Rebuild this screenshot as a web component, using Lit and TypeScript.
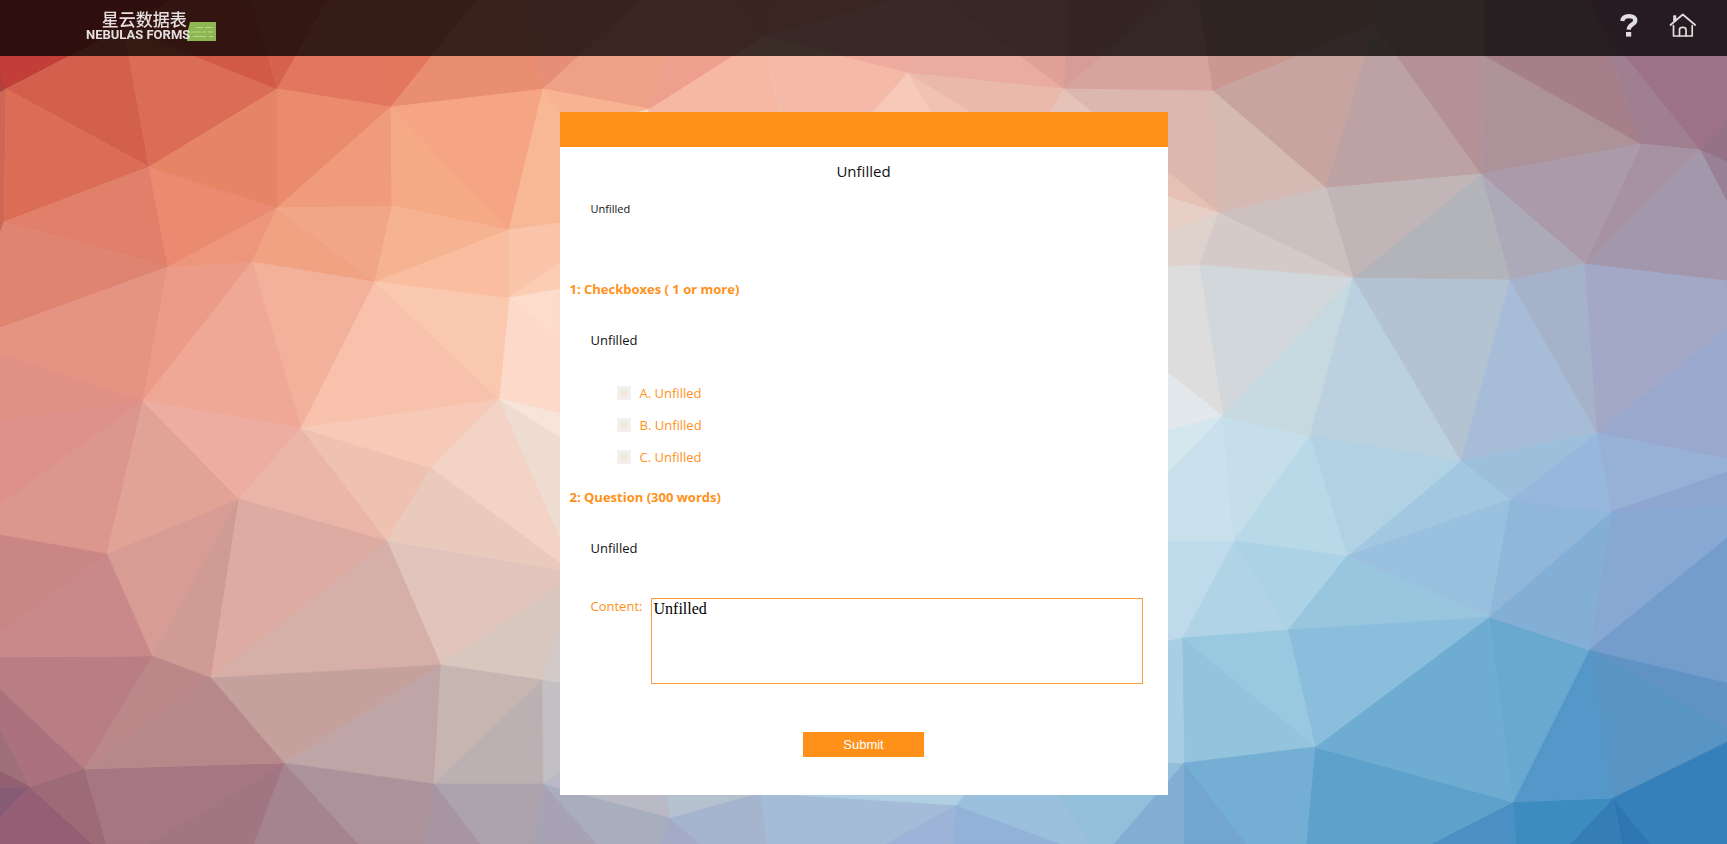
import { LitElement, html, svg, css } from "lit";
import { customElement, property } from "lit/decorators.js";

/* Facets of the low-poly backdrop: fill colour, then the corner points. */
const FACETS = `
C0403A 0,0 124,28 170,0
C33E38 0,0 124,28 6,89 0,67
B83C3A 0,67 6,89 0,87
A84840 0,87 6,89 0,93
D3604D 6,89 124,28 149,167
DB6D56 124,28 149,167 277,89
D25947 124,28 170,0 253,0 277,89
D5624E 277,89 253,0 328,0
E2765E 277,89 328,0 374,0 391,107
E2775E 391,107 374,0 477,0
E98E70 391,107 477,0 522,0 543,89
E68E78 543,89 522,0 640,0
EFA187 543,89 640,0 681,0 650,109
EF9F8D 650,109 681,0 733,0 763,37
CD6756 0,93 6,89 4,222 0,233
DB6D57 6,89 149,167 4,222
E1806A 4,222 149,167 168,267
E98A71 149,167 277,208 168,267
E68466 149,167 277,89 277,208
EA8B6C 277,89 391,107 277,208
F09B7B 391,107 392,206 277,208
F5A985 391,107 509,230 392,206
F5A583 391,107 543,89 509,230
F8B896 543,89 509,230 560,223 560,113
F8B393 543,89 560,113 575,125 650,109
DF8471 4,222 168,267 0,328 0,233
E59383 168,267 143,401 0,354 0,328
ED9B89 168,267 252,262 143,401
ED967B 168,267 277,208 252,262
F0A283 277,208 375,282 252,262
F2A688 277,208 392,206 375,282
F6B392 392,206 509,230 375,282
FABDA0 509,230 509,298 375,282
FAC5AA 509,230 509,298 560,263 560,223
FCCDB2 509,298 560,263 560,289
FDDCCC 509,298 560,289 560,340
FDD9CA 509,298 560,340 560,413 499,399
F3B09A 252,262 375,282 301,428
EFA895 252,262 301,428 143,401
F8C1AC 375,282 499,399 301,428
FAC8AE 375,282 509,298 499,399
E09084 143,401 0,354 0,421
DE918A 143,401 0,421 0,505
DB968D 143,401 107,554 0,535 0,505
E2A397 143,401 239,499 107,554
EDADA1 143,401 301,428 239,499
EBB5A9 301,428 387,541 239,499
EFC1B1 301,428 431,468 387,541
F6CAB6 301,428 499,399 431,468
F2D3C6 499,399 431,468 560,563 560,538
EFDCD0 499,399 560,538 560,437
F7E4DA 499,399 560,437 560,413
EBCABE 431,468 387,541 560,571 560,563
E1C5BC 387,541 441,665 560,586 560,571
D8C7BF 441,665 542,680 560,627 560,586
D2CAC9 542,680 560,627 560,683
C3C0C4 542,680 543,784 560,772 560,683
B9BAC6 543,784 575,762 666,790 670,818
B5C1CF 670,818 666,790 761,793
A8AEBD 543,784 670,818 661,844 597,844
A8A3B4 543,784 597,844 533,844
A5ABC7 670,818 661,844 701,844
A5B5CE 670,818 701,844 767,844 761,793
A4BCD8 761,793 767,844 886,844 956,805
9DB3D8 956,805 886,844 954,844
92B2D8 956,805 954,844 1061,844
9AC0DD 956,805 1061,844 1090,844 1056,790 968,790
93BFDA 1056,790 1090,844 1114,844 1184,763 1160,760
B0CFE2 761,793 956,805 968,790
D79D95 239,499 152,656 107,554
CF9B94 239,499 211,678 152,656
DDABA1 239,499 387,541 211,678
D5AFA8 387,541 441,665 211,678
C4A19C 211,678 441,665 284,763
BFA5A5 441,665 434,784 284,763
C7B5B2 441,665 542,680 434,784
BCB1B2 542,680 543,784 434,784
ADA3AC 434,784 543,784 533,844 480,844
A895A2 434,784 480,844 425,844
AC929B 284,763 434,784 425,844 358,844
A5848F 284,763 358,844 254,844
A17682 284,763 254,844 145,844
A67782 84,769 284,763 145,844 106,844
B6888A 84,769 211,678 284,763
BB8789 84,769 152,656 211,678
B87E83 84,769 152,656 0,657 0,689
AB717D 84,769 30,787 0,728 0,689
A07078 30,787 0,728 0,771
926070 30,787 0,771 0,788
865C74 30,787 0,788 0,818
955E75 30,787 0,818 0,844 93,844
9D6B77 30,787 84,769 106,844 93,844
C98889 107,554 152,656 0,657 0,632
CA8585 107,554 0,632 0,535
EB9C8D 763,37 733,0 773,0
EE9F91 763,37 773,0 895,0
EFAB9D 763,37 895,0 930,0 908,73
EAABA0 908,73 930,0 946,0 1064,89
E0A197 1064,89 946,0 1069,0
D79C96 1064,89 1069,0 1167,0
D7A49D 1064,89 1167,0 1199,0 1213,91
F6B8A2 650,109 763,37 782,124 640,124
F4BAA7 763,37 908,73 873,112 780,112
F6C9B8 908,73 873,112 931,112
F1C2B3 908,73 931,112 971,112
EAB9AB 908,73 1064,89 1051,112 971,112
E5C3B8 1064,89 1051,112 1092,112
DCB7AE 1064,89 1213,91 1219,213
E6C0B3 1219,213 1160,166 1160,194
E8CFC5 1219,213 1160,194 1160,235
DFD1CC 1219,213 1199,265 1160,267 1160,235
CA9791 1213,91 1199,0 1374,0 1374,24
C7A4A0 1213,91 1374,24 1326,188
BDA2A3 1374,24 1481,174 1326,188
B39197 1374,24 1374,0 1485,0 1485,56 1481,174
AD929A 1485,56 1641,144 1481,174
A5808B 1485,56 1485,0 1590,0 1601,26 1641,144
A07F90 1641,144 1601,26 1700,150
9E7286 1601,26 1590,0 1727,0 1727,122 1700,150
957286 1700,150 1727,122 1727,162
998096 1700,150 1727,162 1727,202
A397AB 1700,150 1727,202 1727,281 1585,264
A692A3 1700,150 1585,264 1641,144
AB9BAA 1481,174 1641,144 1585,264
ACAAB8 1481,174 1585,264 1510,280
B3B3BA 1481,174 1510,280 1353,278
C2B5B7 1481,174 1353,278 1326,188
D4BAB3 1213,91 1326,188 1219,213
CDC1C0 1219,213 1326,188 1353,278
D4CBC9 1219,213 1353,278 1199,265
D1D7DA 1199,265 1353,278 1223,416
DDDDDD 1199,265 1223,416 1160,366 1160,267
E3E8EC 1223,416 1160,366 1160,433
D4E6EE 1223,416 1160,433 1160,482
CAE0ED 1223,416 1160,482 1160,541 1234,541
C5DEEA 1223,416 1310,436 1234,541
C7D9E0 1353,278 1310,436 1223,416
BBD1DF 1353,278 1461,461 1310,436
B3C3D2 1353,278 1510,280 1461,461
A7BDD7 1510,280 1597,433 1461,461
A6B2CA 1510,280 1585,264 1597,433
A2A8C6 1585,264 1727,281 1727,328 1597,433
9BA8CD 1597,433 1727,328 1727,459
97B0D6 1597,433 1727,459 1727,472 1611,512
8EA5D0 1611,512 1727,472 1727,505
87A8D3 1611,512 1727,505 1727,538 1589,650
749DCC 1589,650 1727,538 1727,683
6093C4 1589,650 1727,683 1727,728
5895C4 1589,650 1727,728 1727,742 1613,798
3580BB 1613,798 1727,742 1727,844 1650,844
2E75B4 1613,798 1650,844 1622,844
347DB7 1613,798 1622,844 1570,844
3D8CC0 1513,802 1613,798 1570,844 1516,844
4A90C2 1513,802 1516,844 1431,844
5EA1CB 1513,802 1315,747 1306,844 1431,844
5497C8 1513,802 1589,650 1613,798
69A9CF 1489,617 1589,650 1513,802
6FACD1 1489,617 1513,802 1315,747
83AED5 1489,617 1611,512 1589,650
90B7DA 1489,617 1510,500 1611,512
97B7DC 1597,433 1611,512 1510,500
9CC0DB 1461,461 1597,433 1510,500
A2C7E1 1461,461 1510,500 1347,556
99C0DE 1510,500 1489,617 1347,556
B0D2E3 1310,436 1461,461 1347,556
B8D9E7 1310,436 1347,556 1234,541
ACD3E5 1234,541 1347,556 1288,630
B0D4E5 1234,541 1288,630 1182,638
BFDAEB 1234,541 1182,638 1160,643 1160,541
99C6DF 1347,556 1489,617 1288,630
8BBEDC 1288,630 1489,617 1315,747
99C9E0 1182,638 1288,630 1315,747
93C3DD 1182,638 1315,747 1184,763
A7CEE3 1182,638 1184,763 1160,762 1160,643
74AED4 1184,763 1315,747 1306,844 1246,844
72A6CF 1184,763 1246,844 1184,844
82AED4 1184,763 1184,844 1114,844`
  .trim()
  .split("\n")
  .map((row) => ({ fill: "#" + row.slice(0, 6), points: row.slice(7) }));

@customElement("poly-backdrop")
class PolyBackdrop extends LitElement {
  static styles = css`
    :host {
      display: block;
    }
    .art {
      display: block;
      width: 100%;
      height: 100%;
    }
  `;

  render() {
    return html`<svg class="art" viewBox="0 0 1727 844" preserveAspectRatio="xMidYMid slice" aria-hidden="true">
      <defs>
        <linearGradient id="base" x1="0" y1="0" x2="1" y2="1">
          <stop offset="0.3" stop-color="#fbd9c8" />
          <stop offset="0.7" stop-color="#b8d4e6" />
        </linearGradient>
      </defs>
      <rect width="1727" height="844" fill="url(#base)" />
      ${FACETS.map((f) => svg`<polygon points=${f.points} fill=${f.fill} stroke=${f.fill} stroke-width="0.6" />`)}
    </svg>`;
  }
}

@customElement("site-header")
class SiteHeader extends LitElement {
  static styles = css`
    :host {
      display: block;
      background: rgba(0, 0, 0, 0.76);
    }
    .bar {
      display: flex;
      justify-content: space-between;
      align-items: center;
      height: 50px;
      padding: 0 30px 6px 86px;
    }
    .brand {
      display: grid;
      grid-template-columns: 102px 28px;
      align-items: end;
      color: #e4dede;
      text-decoration: none;
    }
    .names {
      display: grid;
      justify-items: center;
      grid-area: 1 / 1 / 2 / 3;
      justify-self: start;
      z-index: 1;
    }
    .cn {
      font: 500 17px/17px "Noto Sans CJK SC", sans-serif;
      padding-left: 12px;
    }
    .en {
      padding-top: 1px;
      font: bold 13px/13px Roboto, sans-serif;
      white-space: nowrap;
    }
    .leaf {
      grid-area: 1 / 2;
      justify-self: end;
    }
    .tools {
      display: flex;
      gap: 30px;
    }
    .tool {
      display: block;
      height: 24px;
      color: #e2dde0;
    }
    svg {
      display: block;
    }
  `;

  render() {
    return html`<header class="bar">
      <a class="brand" href="#">
        <span class="names">
          <span class="cn">星云数据表</span>
          <span class="en">NEBULAS FORMS</span>
        </span>
        <svg class="leaf" width="29" height="19" viewBox="0 0 29 19" aria-hidden="true">
          <path d="M3 0H29V19H0V12Z" fill="#8cb84f" />
          <path d="M9 5.500h7M18 5.500h8M4 10h10M16 10h3M21 10h5M6 14.500h13M22 14.500h4" stroke="#b9d494" stroke-width="1" />
        </svg>
      </a>
      <nav class="tools">
        <a class="tool" href="#help" aria-label="Help">
          <svg width="20" height="24" viewBox="0 0 20 24">
            <path d="M3.300 8C3.800 4.600 6.200 3.100 9.800 3.100C13.800 3.100 16.300 4.700 16.300 7.600C16.300 11.600 9.900 11.200 9.700 16.600" fill="none" stroke="currentColor" stroke-width="4.200" />
            <rect x="7" y="19" width="5.200" height="4.600" fill="currentColor" />
          </svg>
        </a>
        <a class="tool" href="#home" aria-label="Home">
          <svg width="28" height="24" viewBox="0 0 28 24" fill="none" stroke="currentColor" stroke-width="1.700" stroke-linecap="round" stroke-linejoin="round">
            <path d="M1.500 12L13.800 1.500L26.200 12M5 8.500V3.200H6.400V7M4.500 12.500V23H23.200V12.500" />
            <path d="M10.500 23V16.600C10.500 13.600 17 13.600 17 16.600V23" />
          </svg>
        </a>
      </nav>
    </header>`;
  }
}

@customElement("survey-form")
class SurveyForm extends LitElement {
  @property({ attribute: false }) choices = ["A", "B", "C"];

  static styles = css`
    :host {
      display: block;
      background: #fff;
      color: #111;
      font: 13px/20px "Open Sans", sans-serif;
    }
    .strip {
      height: 35px;
      background: #ff911a;
    }
    .form {
      padding: 14px 0 38px;
    }
    .title {
      margin: 0;
      font-size: 15px;
      font-weight: 400;
      line-height: 20px;
      text-align: center;
    }
    .intro {
      margin: 18px 31px 0;
      font-size: 11px;
    }
    .question {
      margin: 60px 25px 0 10px;
    }
    .question + .question {
      margin-top: 20px;
    }
    .heading {
      margin: 0;
      color: #ff911a;
      font-size: 13px;
      font-weight: 700;
      line-height: 20px;
    }
    .note {
      margin: 31px 0 0 21px;
    }
    .choices {
      display: grid;
      gap: 12px;
      margin: 33px 0 0;
      padding: 0 0 0 47px;
      list-style: none;
    }
    .choice {
      display: flex;
      align-items: center;
      gap: 9px;
      color: #ff911a;
    }
    .box {
      appearance: none;
      width: 14px;
      height: 14px;
      margin: 0;
      border: 3px solid #f1f1f1;
      background: #f4e8dc;
    }
    .box:checked {
      background: #ff911a;
    }
    .answer {
      display: grid;
      grid-template-columns: 60px 1fr;
      margin: 38px 0 0 21px;
    }
    .label {
      color: #ff911a;
    }
    .text {
      box-sizing: border-box;
      width: 100%;
      height: 86px;
      margin: 2px 0 0;
      padding: 2px;
      border: 1px solid #ff9f3b;
      resize: none;
      outline: 0;
      color: #000;
      font: 16px/16px "Liberation Serif", serif;
    }
    .actions {
      display: flex;
      justify-content: center;
      margin-top: 48px;
    }
    .submit {
      width: 121px;
      height: 25px;
      padding: 0;
      border: 0;
      background: #ff911a;
      color: #fff;
      font: 13px/25px "Liberation Sans", sans-serif;
    }
  `;

  render() {
    return html`<div class="strip"></div>
      <form class="form">
        <h1 class="title">Unfilled</h1>
        <p class="intro">Unfilled</p>
        <section class="question">
          <h2 class="heading">1: Checkboxes ( 1 or more)</h2>
          <p class="note">Unfilled</p>
          <ul class="choices">
            ${this.choices.map(
              (c) => html`<li class="choice">
                <input class="box" type="checkbox" id="choice-${c}" />
                <label for="choice-${c}">${c}. Unfilled</label>
              </li>`
            )}
          </ul>
        </section>
        <section class="question">
          <h2 class="heading">2: Question (300 words)</h2>
          <p class="note">Unfilled</p>
          <div class="answer">
            <label class="label" for="content">Content:</label>
            <textarea class="text" id="content" .value=${"Unfilled"}></textarea>
          </div>
        </section>
        <div class="actions"><button class="submit" type="button">Submit</button></div>
      </form>`;
  }
}

@customElement("app-root")
class AppRoot extends LitElement {
  static styles = css`
    :host {
      display: block;
    }
    .backdrop {
      position: fixed;
      inset: 0;
      z-index: -1;
    }
    .main {
      display: grid;
      justify-content: center;
      grid-template-columns: minmax(0, 608px);
      padding: 56px 16px 50px;
    }
  `;

  render() {
    return html`<poly-backdrop class="backdrop"></poly-backdrop>
      <site-header></site-header>
      <main class="main"><survey-form></survey-form></main>`;
  }
}
